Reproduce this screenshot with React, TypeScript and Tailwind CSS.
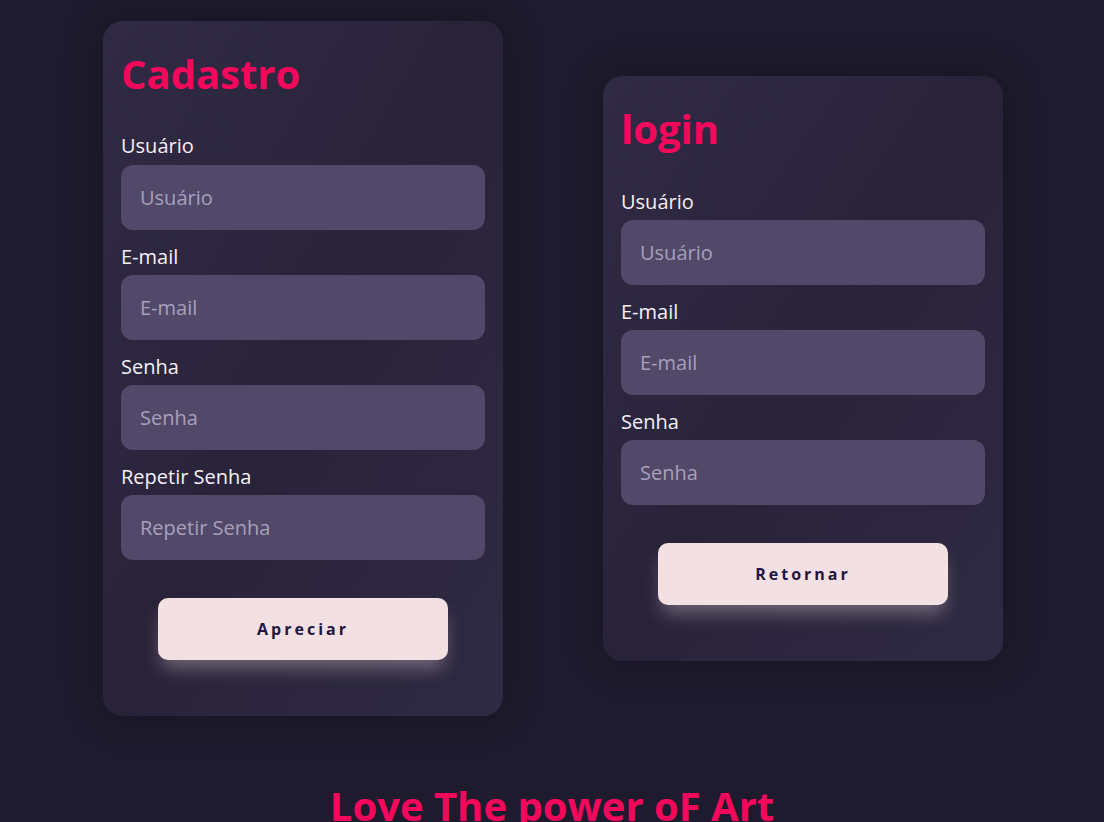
import { useState } from "react";

interface Field {
  label: string;
  type: string;
}

const cadastroFields: Field[] = [
  { label: "Usuário", type: "text" },
  { label: "E-mail", type: "email" },
  { label: "Senha", type: "password" },
  { label: "Repetir Senha", type: "password" },
];

const loginFields: Field[] = [
  { label: "Usuário", type: "text" },
  { label: "E-mail", type: "email" },
  { label: "Senha", type: "password" },
];

const FormCard = ({
  title,
  fields,
  button,
}: {
  title: string;
  fields: Field[];
  button: string;
}) => {
  const [values, setValues] = useState<Record<string, string>>({});

  return (
    <form
      onSubmit={(e) => e.preventDefault()}
      className="w-[400px] rounded-[20px] bg-gradient-to-br from-[#302a45] via-[#29233a] to-[#2f2a43] px-[18px] pt-[19px] pb-[56px] shadow-[0_0_40px_rgba(0,0,0,0.28)]"
    >
      <h2 className="mt-[7px] text-[40px] font-bold leading-[1.362] text-[#f5085c]">
        {title}
      </h2>
      <div className="mt-[31px] flex flex-col gap-[13px]">
        {fields.map((f) => (
          <div key={f.label} className="flex flex-col gap-[5px]">
            <label className="text-[20px] leading-[1.362] text-[#f6f0f6]">
              {f.label}
            </label>
            <input
              type={f.type}
              placeholder={f.label}
              value={values[f.label] ?? ""}
              onChange={(e) =>
                setValues({ ...values, [f.label]: e.target.value })
              }
              className="h-[65px] w-full rounded-[12px] bg-[#52486a] px-[19px] text-[20px] text-white placeholder:text-[#a7a0b9] focus:outline-none"
            />
          </div>
        ))}
      </div>
      <div className="mt-[38px] flex justify-center">
        <button
          type="submit"
          className="h-[62px] w-[290px] rounded-[10px] bg-[#f2e0e2] text-[16px] font-bold tracking-[3px] text-[#1f1642] shadow-[0_12px_18px_-4px_rgba(242,224,226,0.35)]"
        >
          {button}
        </button>
      </div>
    </form>
  );
};

const App = () => {
  return (
    <div
      className="min-h-screen bg-[#1f1b2e]"
      style={{ fontFamily: '"Open Sans", "Noto Sans", sans-serif' }}
    >
      <div className="flex items-center justify-center gap-[100px] pl-[2px] pt-[21px]">
        <FormCard title="Cadastro" fields={cadastroFields} button="Apreciar" />
        <FormCard title="login" fields={loginFields} button="Retornar" />
      </div>
      <h1 className="mt-[63px] pb-10 text-center text-[40px] font-bold leading-[1.362] text-[#f5085c]">
        Love The power oF Art
      </h1>
    </div>
  );
};

export default App;
